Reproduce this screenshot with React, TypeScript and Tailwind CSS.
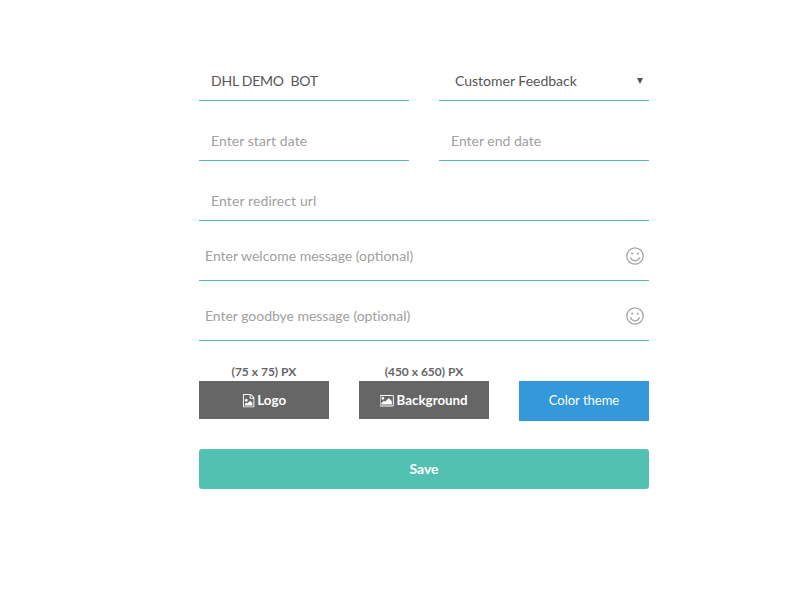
import type { ReactNode } from "react";

const line = "h-[41px] border-b border-[#4fc1b0] flex items-center text-[14px]";

function Field({ text, className = "", value = false }: { text: string; className?: string; value?: boolean }) {
  return (
    <div className={`${line} pl-3 ${value ? "text-[#555555]" : "text-[#a0a0a0]"} ${className}`}>
      {text}
    </div>
  );
}

function Smile() {
  return (
    <svg width="18" height="18" viewBox="0 0 18 18" fill="none" stroke="#a6a6a6" strokeWidth="1.3">
      <circle cx="9" cy="9" r="8.2" />
      <circle cx="6.2" cy="6.6" r="1.100" fill="#a6a6a6" stroke="none" />
      <circle cx="11.8" cy="6.6" r="1.100" fill="#a6a6a6" stroke="none" />
      <path d="M4.6 10.800c.9 2 2.500 3 4.400 3s3.500-1 4.400-3" strokeLinecap="round" />
    </svg>
  );
}

function FileImageIcon() {
  return (
    <svg width="13.33" height="13.33" viewBox="0 0 1792 1792" fill="currentColor">
      <path d="M1596 380q28 28 48 76t20 88v1152q0 40-28 68t-68 28h-1344q-40 0-68-28t-28-68v-1600q0-40 28-68t68-28h896q40 0 88 20t76 48zm-444-244v376h376q-10-29-22-41l-313-313q-12-12-41-22zm384 1528v-1024h-416q-40 0-68-28t-28-68v-416h-768v1536h1280zm-128-448v320h-1024v-192l192-192 128 128 384-384zm-832-192q-80 0-136-56t-56-136 56-136 136-56 136 56 56 136-56 136-136 56z" />
    </svg>
  );
}

function PictureIcon() {
  return (
    <svg width="14.3" height="13.33" viewBox="0 0 1920 1792" fill="currentColor">
      <path d="M576 576q0 80-56 136t-136 56-136-56-56-136 56-136 136-56 136 56 56 136zm1024 384v448h-1408v-192l320-320 160 160 512-512zm96-704h-1600q-13 0-22.500 9.500t-9.500 22.500v1216q0 13 9.500 22.500t22.500 9.500h1600q13 0 22.500-9.500t9.500-22.500v-1216q0-13-9.500-22.500t-22.500-9.500zm160 32v1216q0 66-47 113t-113 47h-1600q-66 0-113-47t-47-113v-1216q0-66 47-113t113-47h1600q66 0 113 47t47 113z" />
    </svg>
  );
}

function Message({ text, className = "" }: { text: string; className?: string }) {
  return (
    <div className={`${line} pl-[6px] pr-[5px] pb-[9px] justify-between text-[#a0a0a0]`}>
      <span className={className}>{text}</span>
      <Smile />
    </div>
  );
}

function Upload({ size, label, icon }: { size: string; label: string; icon: ReactNode }) {
  return (
    <div className="w-[130px] flex flex-col">
      <div className="h-[22px] pt-[4px] text-center text-[12px] font-bold text-[#666666] leading-[18px]">{size}</div>
      <div className="h-[38px] pt-[2px] bg-[#666666] text-white text-[13.33px] font-bold flex items-center justify-center gap-[2px]">
        {icon}
        <span>{label}</span>
      </div>
    </div>
  );
}

export default function App() {
  return (
    <div className="w-[800px] h-[600px] bg-white pt-[60px] pl-[199px] font-['Lato',sans-serif]">
      <div className="w-[450px] flex flex-col">
        <div className="flex justify-between">
          <Field text="DHL DEMO  BOT" value className="w-[210px] whitespace-pre tracking-[-0.23px]" />
          <div className={`${line} w-[210px] pl-4 pr-[5px] justify-between text-[#555555]`}>
            <span>Customer Feedback</span>
            <span className="w-0 h-0 mr-[1px] mt-[1px] border-x-[3px] border-x-transparent border-t-[6px] border-t-[#555555]" />
          </div>
        </div>
        <div className="flex justify-between mt-[19px]">
          <Field text="Enter start date" className="w-[210px] tracking-[0.06px]" />
          <Field text="Enter end date" className="w-[210px]" />
        </div>
        <Field text="Enter redirect url" className="mt-[19px] tracking-[0.11px]" />
        <div className="mt-[19px]">
          <Message text="Enter welcome message (optional)" />
        </div>
        <div className="mt-[19px]">
          <Message text="Enter goodbye message (optional)" className="tracking-[-0.03px]" />
        </div>
        <div className="flex justify-between mt-[18px]">
          <Upload size="(75 x 75) PX" label="Logo" icon={<FileImageIcon />} />
          <Upload size="(450 x 650) PX" label="Background" icon={<PictureIcon />} />
          <div className="w-[130px] h-[40px] mt-[22px] pb-[1px] bg-[#3498db] text-white text-[13px] flex items-center justify-center">
            Color theme
          </div>
        </div>
        <div className="mt-[28px] h-[40px] pb-[1px] rounded-[3px] bg-[#53c1b1] text-white text-[14px] font-bold flex items-center justify-center">
          Save
        </div>
      </div>
    </div>
  );
}
